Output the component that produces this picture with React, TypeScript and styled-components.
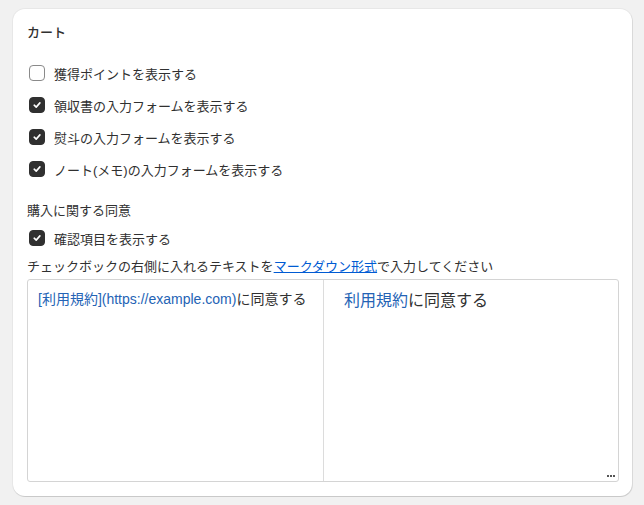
import styled, { createGlobalStyle } from "styled-components";

const GlobalStyle = createGlobalStyle`
  body {
    margin: 0;
    background: #f1f1f1;
    font-family: "Liberation Sans", "Noto Sans CJK JP", sans-serif;
    color: #303030;
  }
`;

const Page = styled.div`
  padding: 9px 12px 11px 13px;
`;

const Card = styled.section`
  width: 619px;
  box-sizing: border-box;
  background: #ffffff;
  border-radius: 12px;
  box-shadow: 0 1px 0 rgba(0, 0, 0, 0.07), 0 0 0 1px rgba(0, 0, 0, 0.04),
    1px 1px 0 rgba(0, 0, 0, 0.06);
  padding: 15px 13px 14px 14px;
  display: flex;
  flex-direction: column;
`;

const Title = styled.h2`
  margin: 0 0 15px;
  font-size: 13px;
  font-weight: 500;
  line-height: 18px;
`;

const Row = styled.label`
  display: flex;
  align-items: center;
  gap: 9px;
  height: 32px;
  padding-left: 2px;
  font-size: 13px;
`;

const Box = styled.span<{ checked: boolean }>`
  width: 16px;
  height: 16px;
  box-sizing: border-box;
  border-radius: 4px;
  flex-shrink: 0;
  display: flex;
  align-items: center;
  justify-content: center;
  background: ${(p) => (p.checked ? "#303030" : "#ffffff")};
  border: 1px solid ${(p) => (p.checked ? "#303030" : "#8a8a8a")};
`;

const SectionLabel = styled.div`
  margin-top: 17px;
  font-size: 13px;
  line-height: 18px;
  margin-bottom: 2px;
`;

const Help = styled.div`
  font-size: 13px;
  line-height: 18px;
  margin-top: 4px;
  margin-bottom: 3px;
  a {
    color: #005bd3;
    text-decoration: underline;
  }
`;

const Editor = styled.div`
  position: relative;
  height: 201px;
  border: 1px solid #d4d4d4;
  border-radius: 3px;
  display: grid;
  grid-template-columns: 296px 1fr;
`;

const Source = styled.div`
  padding: 9px 10px;
  font-size: 14px;
  line-height: 20px;
  color: #303030;
  border-right: 1px solid #dcdcdc;
  span {
    color: #2463b5;
  }
`;

const Preview = styled.div`
  padding: 11px 20px;
  font-size: 16px;
  line-height: 20px;
  color: #303030;
  a {
    color: #2463b5;
    text-decoration: none;
  }
`;

const Grip = styled.div`
  position: absolute;
  right: 3px;
  bottom: 4px;
  display: flex;
  gap: 1px;
  i {
    width: 2px;
    height: 2px;
    background: #555;
  }
`;

function Check() {
  return (
    <svg width="10" height="10" viewBox="0 0 10 10">
      <path
        d="M2.2 5.2 L4.2 7.1 L7.9 2.9"
        fill="none"
        stroke="#fff"
        strokeWidth="1.6"
        strokeLinecap="round"
        strokeLinejoin="round"
      />
    </svg>
  );
}

const options = [
  { label: "獲得ポイントを表示する", checked: false },
  { label: "領収書の入力フォームを表示する", checked: true },
  { label: "熨斗の入力フォームを表示する", checked: true },
  { label: "ノート(メモ)の入力フォームを表示する", checked: true },
];

export default function App() {
  return (
    <Page>
      <GlobalStyle />
      <Card>
        <Title>カート</Title>
        {options.map((o) => (
          <Row key={o.label}>
            <Box checked={o.checked}>{o.checked && <Check />}</Box>
            {o.label}
          </Row>
        ))}
        <SectionLabel>購入に関する同意</SectionLabel>
        <Row>
          <Box checked>
            <Check />
          </Box>
          確認項目を表示する
        </Row>
        <Help>
          チェックボックの右側に入れるテキストを<a href="#">マークダウン形式</a>で入力してください
        </Help>
        <Editor>
          <Source>
            <span>[利用規約](https://example.com)</span>に同意する
          </Source>
          <Preview>
            <a href="#">利用規約</a>に同意する
          </Preview>
          <Grip>
            <i />
            <i />
            <i />
          </Grip>
        </Editor>
      </Card>
    </Page>
  );
}
